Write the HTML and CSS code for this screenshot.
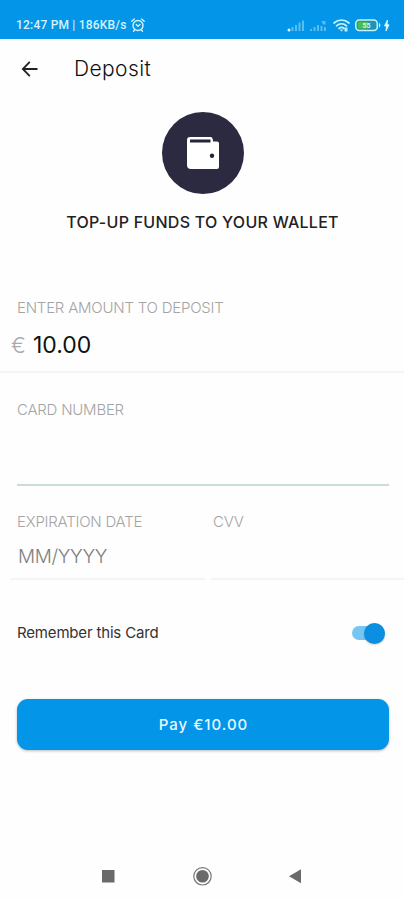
FILE: index.html
```html
<!DOCTYPE html>
<html lang="en">
<head>
<meta charset="utf-8">
<title>Deposit</title>
<link rel="stylesheet" href="styles.css">
</head>
<body>
<div class="screen">
  <div class="status">
    <span class="clock">12:47 PM | 186KB/s</span>
    <svg class="alarm" width="16" height="16" viewBox="0 0 16 16" fill="none" stroke="#d5f3fb" stroke-width="1.4" stroke-linecap="round"><circle cx="8" cy="8.5" r="5"/><path d="M1.800 4.200 4.400 2M14.200 4.200 11.600 2M4.500 13l-1 1.200M11.500 13l1 1.200M6.200 7.600 8 9.200l2-1.700"/></svg>
    <svg class="signals" width="104" height="16" viewBox="0 0 104 16">
      <g fill="#58bdf1"><path d="M4.500 10h2v4h-2zM8 8h2v6H8zM11.500 5.500h2V14h-2zM15 3.500h2V14h-2z"/><path d="M23 12h2v2h-2zM26.500 10h2v4h-2zM30 8h2v6h-2zM33.500 9h2v5h-2zM37 10h2v4h-2z"/><path d="M34.500 4h4v3.500h-2.500z"/></g>
      <circle cx="2" cy="13" r="1.500" fill="#e2ffff"/>
      <g fill="none" stroke="#c9f5fb" stroke-width="1.700" stroke-linecap="round"><path d="M47 6c4.500-4 10.500-4 15 0M49.500 8.800c3-2.600 7-2.600 10 0M52 11.400c1.600-1.300 3.400-1.300 5 0"/></g>
      <path d="m52.500 12.500 2 2 2-2zM57.500 10.500h3v4h-3z" fill="#b9edf9"/>
      <rect x="68.800" y="3" width="21.500" height="10.500" rx="3.500" fill="#1f93b8" stroke="#c5f2ef" stroke-width="1.600"/>
      <path d="M71 5h10v6.500H71z" fill="#4cbe51"/>
      <path d="M92 6c1.800.5 1.800 4 0 4.500z" fill="#c5f2ef"/>
      <text class="charge" x="79.500" y="11" text-anchor="middle">55</text>
      <path d="m100.500 3-3 6h2l-.5 5 3-6.200h-2z" fill="#e4ffff" stroke="#e4ffff" stroke-width=".8"/>
    </svg>
  </div>
  <header class="appbar">
    <svg class="back" width="18" height="18" viewBox="0 0 18 18" fill="none" stroke="#222" stroke-width="1.800"><path d="M16.500 9H2M8.800 1.800 1.800 9l7 7.200"/></svg>
    <h1 class="title">Deposit</h1>
  </header>
  <section class="hero">
    <div class="badge">
      <svg width="34" height="34" viewBox="0 0 34 34"><path d="M4 1h20.500q2.500 0 2.500 4.500h4q2 0 2 2V31q0 2-2 2H5q-4 0-4-4V4q0-3 3-3z" fill="#fff"/><path d="M4 3.500h20.500v3H4z" fill="#25243a"/><circle cx="26" cy="19.800" r="2.200" fill="#25243a"/></svg>
    </div>
    <h2 class="headline">TOP-UP FUNDS TO YOUR WALLET</h2>
  </section>
  <section class="amount">
    <label class="label label-amount">ENTER AMOUNT TO DEPOSIT</label>
    <div class="money"><span class="euro">€</span><span class="value">10.00</span></div>
  </section>
  <section class="card-number"><label class="label label-card">CARD NUMBER</label></section>
  <section class="details">
    <div class="field expiry"><label class="label label-exp">EXPIRATION DATE</label><span class="placeholder">MM/YYYY</span></div>
    <div class="field cvv"><label class="label label-cvv">CVV</label></div>
  </section>
  <div class="remember"><span class="remember-text">Remember this Card</span><span class="switch"><span class="thumb"></span></span></div>
  <button class="pay"><span>Pay €10.00</span></button>
  <nav class="nav">
    <svg width="404" height="48" viewBox="0 0 404 48"><g fill="#6a6a6a"><path d="M102 18h12.500v12.500H102z"/><circle cx="202.500" cy="24.300" r="6.300"/><path d="M289 24.300 301 17.300v14z"/></g><circle cx="202.500" cy="24.300" r="8.700" fill="none" stroke="#777" stroke-width="1.200"/></svg>
  </nav>
</div>
</body>
</html>
```
FILE: styles.css
```css
* { box-sizing: border-box; }
body { margin: 0; background: #fefefe; font-family: Inter, sans-serif; }
.screen { width: 404px; height: 900px; display: flex; flex-direction: column; overflow: hidden; }
.screen > * { flex-shrink: 0; }
.status { height: 39px; padding: 10px 13px 0 16px; background: #0295e8; display: flex; align-items: center; }
.clock { font: 500 12px/16px Roboto, sans-serif; color: #d5f3fb; white-space: nowrap; letter-spacing: 0.2px; }
.alarm { margin-left: 3px; }
.signals { margin-left: auto; }
.charge { font: 700 7px Roboto, sans-serif; fill: #d9f7d8; }
.appbar { height: 59px; padding-left: 21px; display: flex; align-items: center; }
.title { margin: 0 0 0 35px; font-size: 21px; font-weight: 300; line-height: 28px; letter-spacing: 0.4px; color: #111; }
.hero { height: 183px; padding: 14px 0 0 1px; display: flex; flex-direction: column; align-items: center; }
.badge { width: 82px; height: 82px; border-radius: 50%; background: #2b2a40; display: flex; align-items: center; justify-content: center; }
.headline { margin: 18px 0 0; font-size: 16px; font-weight: 500; line-height: 20px; letter-spacing: 0.26px; color: #222; white-space: nowrap; }
.amount { height: 92px; padding-top: 17px; border-bottom: 2px solid #f5f5f5; }
.label { display: block; margin-left: 17px; font-size: 15px; font-weight: 300; line-height: 20px; letter-spacing: -0.23px; color: #a4a4a4; white-space: nowrap; }
.money { margin-top: 12px; padding-left: 11px; display: flex; font-size: 23px; line-height: 30px; }
.euro { width: 22px; font-size: 22px; font-weight: 300; color: #aaa; }
.value { color: #111; }
.card-number { height: 86px; margin: 27px 15px 0 17px; border-bottom: 2px solid #cbdcdb; }
.card-number .label { margin-left: 0; }
.details { height: 94px; display: flex; gap: 6px; padding-left: 10px; }
.field { padding-top: 26px; border-bottom: 2px solid #f5f5f5; }
.expiry { width: 195px; }
.cvv { flex: 1; }
.expiry .label { margin-left: 7px; }
.cvv .label { margin-left: 2px; }
.placeholder { display: block; margin: 12px 0 0 8px; font-size: 19px; font-weight: 300; line-height: 26px; letter-spacing: -0.35px; color: #808080; }
.remember { height: 40px; margin: 33px 19px 0 17px; display: flex; align-items: center; justify-content: space-between; }
.remember-text { font-size: 15px; line-height: 20px; letter-spacing: -0.17px; color: #333; }
.switch { width: 33px; height: 14px; border-radius: 7px; background: #76c5f2; display: flex; align-items: center; justify-content: flex-end; }
.thumb { width: 21px; height: 21px; border-radius: 50%; background: #0a8fe2; box-shadow: 0 1px 2px #0003; }
.pay { height: 51px; margin: 46px 15px 0 17px; padding: 0 0 0 1px; border: 0; border-radius: 11px; background: #0295e8; box-shadow: 0 1px 3px #0004; color: #e8f8ff; font: 500 15px/20px Inter, sans-serif; letter-spacing: 1px; }
.nav { margin-top: auto; height: 48px; }
.nav svg { display: block; }
```
